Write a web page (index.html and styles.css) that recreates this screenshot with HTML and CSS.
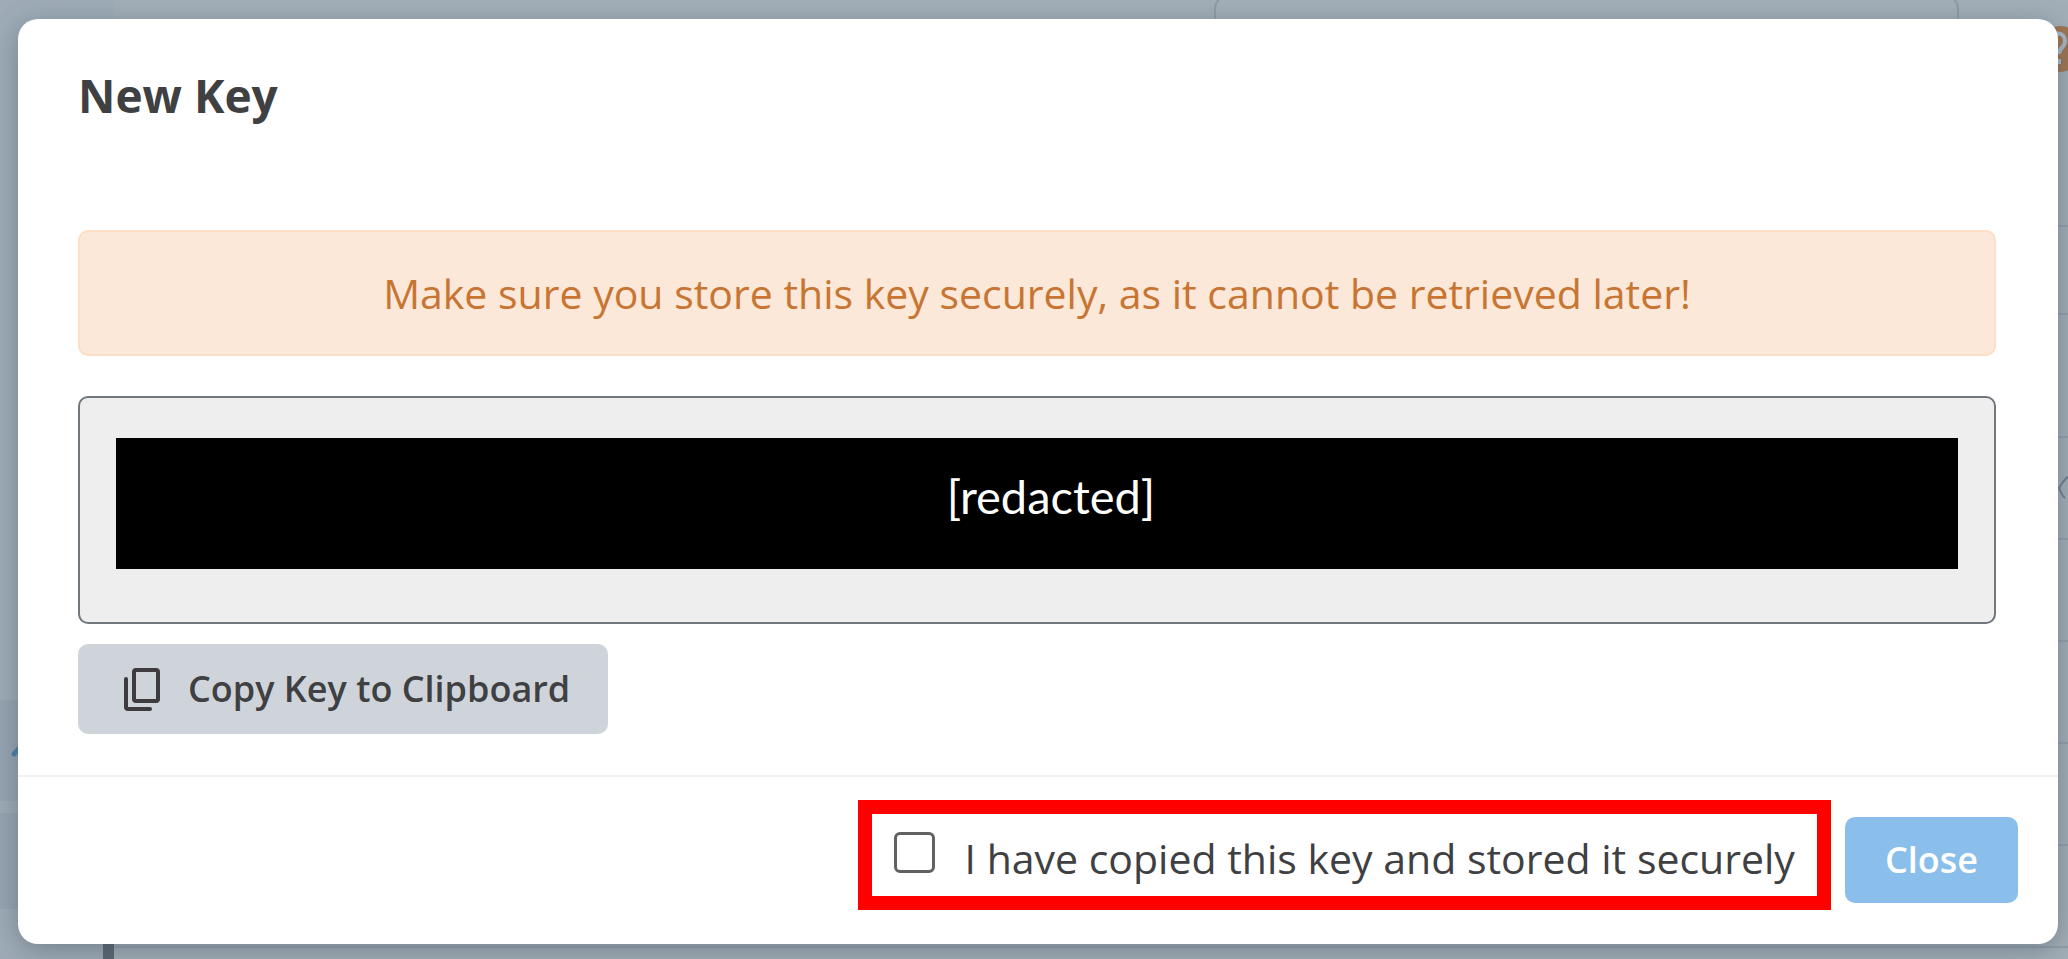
FILE: index.html
```html
<!DOCTYPE html>
<html lang="en">
<head>
<meta charset="utf-8">
<title>New Key</title>
<link rel="stylesheet" href="styles.css">
</head>
<body>
<div class="app" aria-hidden="true">
  <div class="sidebar">
    <div class="nav-item">
      <svg class="nav-icon" width="24" height="24" viewBox="0 0 24 24"><path d="M4 18 18 3" fill="none" stroke="#4680ae" stroke-width="5" stroke-linecap="round"/></svg>
    </div>
    <div class="nav-item"></div>
    <div class="scroll-thumb"></div>
  </div>
  <div class="content">
    <div class="topbar">
      <div class="search"></div>
      <svg class="help" width="46" height="46" viewBox="0 0 46 46"><circle cx="23" cy="23" r="23" fill="#a07550"/><path d="M14 15c0-10 14-10 14 0 0 7-6 6-6 13M22 33v5" fill="none" stroke="#a9bacb" stroke-width="4"/></svg>
    </div>
    <div class="rows">
      <div class="row first"></div>
      <div class="row tall"></div>
      <div class="row wide"></div>
      <div class="row"><svg class="chevron" width="10" height="24" viewBox="0 0 10 24"><path d="M10 1C6 3 4 8 1 12c2 4 3 8 6 10" fill="none" stroke="#6d8091" stroke-width="2"/></svg></div>
      <div class="row"></div>
      <div class="row"></div>
      <div class="row"></div>
      <div class="row"></div>
    </div>
  </div>
</div>
<div class="overlay">
  <section class="modal" role="dialog" aria-modal="true" aria-labelledby="title">
    <div class="body">
      <h1 class="title" id="title">New Key</h1>
      <div class="alert" role="alert">Make sure you store this key securely, as it cannot be retrieved later!</div>
      <div class="key-box"><div class="redacted">[redacted]</div></div>
      <button class="btn copy" type="button">
        <svg width="44" height="48" viewBox="0 0 44 48"><g fill="none" stroke="#3d3b3d" stroke-width="4" stroke-linejoin="round" stroke-linecap="round"><rect x="14" y="5" width="24" height="31" rx="2"/><path d="M6 14v28a2 2 0 0 0 2 2h22"/></g></svg>
        <span>Copy Key to Clipboard</span>
      </button>
    </div>
    <div class="footer">
      <label class="confirm"><input class="check" type="checkbox"><span>I have copied this key and stored it securely</span></label>
      <button class="btn close" type="button">Close</button>
    </div>
  </section>
</div>
</body>
</html>
```
FILE: styles.css
```css
* { box-sizing: border-box; }
body {
  margin: 0;
  position: relative;
  overflow: hidden;
  min-height: 100vh;
  background: #a3afb8;
  color: #3f4042;
  font-family: "Open Sans", "Noto Sans", sans-serif;
}
.app {
  position: absolute;
  inset: 0;
  display: flex;
}
.sidebar {
  width: 114px;
  padding-top: 700px;
  display: flex;
  flex-direction: column;
  gap: 12px;
  background: #9facb8;
}
.nav-item {
  height: 101px;
  padding: 36px 0 0 10px;
  background: #98a5b1;
  flex: none;
}
.nav-item + .nav-item { height: 96px; }
.scroll-thumb {
  width: 11px;
  flex: 1;
  align-self: flex-end;
  background: #5b6670;
}
.content { flex: 1; }
.topbar {
  height: 72px;
  display: flex;
  justify-content: flex-end;
  gap: 78px;
  margin-right: -15px;
}
.search {
  width: 745px;
  height: 48px;
  margin-top: -4px;
  border: 2px solid #8f9ca9;
  border-radius: 12px;
}
.help { margin-top: 26px; flex: none; }
.row {
  height: 102px;
  border-bottom: 2px solid #93a0ab;
  display: flex;
  justify-content: flex-end;
  align-items: center;
}
.row.first { height: 155px; }
.row.tall { height: 88px; }
.row.wide { height: 123px; }
.overlay {
  position: relative;
  min-height: 100vh;
  padding: 19px 10px 15px 18px;
  display: flex;
}
.modal {
  flex: 1;
  display: flex;
  flex-direction: column;
  background: #fff;
  border-radius: 20px;
  box-shadow: 0 6px 28px rgba(60, 75, 88, 0.45);
}
.body {
  padding: 43px 62px 41px 60px;
  flex: 1;
}
.title {
  margin: 0 0 102px;
  font-size: 46px;
  line-height: 66px;
  font-weight: 700;
}
.alert {
  padding: 31px 24px;
  border: 2px solid #fddfc5;
  border-radius: 10px;
  background: #fbe8d8;
  color: #c87533;
  font-size: 41px;
  line-height: 60px;
  text-align: center;
}
.key-box {
  margin: 40px 0 20px;
  padding: 40px 36px 53px;
  border: 2px solid #70777d;
  border-radius: 10px;
  background: #eee;
}
.redacted {
  padding: 28px 0 43px 28px;
  background: #000;
  color: #fff;
  font-family: Lato, "Open Sans", sans-serif;
  font-size: 47px;
  line-height: 60px;
  text-align: center;
}
.btn {
  display: flex;
  align-items: center;
  border: 0;
  border-radius: 10px;
  font-family: inherit;
  font-size: 36px;
  line-height: 50px;
  font-weight: 600;
}
.copy {
  gap: 24px;
  padding: 20px 38px 20px 42px;
  background: #cfd4db;
  color: #3f4042;
}
.footer {
  padding: 23px 40px 34px;
  border-top: 2px solid #f1f1f1;
  display: flex;
  justify-content: flex-end;
  align-items: center;
  gap: 14px;
}
.confirm {
  display: flex;
  align-items: flex-start;
  gap: 30px;
  padding: 14px 22px 8px;
  border: 14px solid #f00;
  font-size: 41px;
  line-height: 60px;
}
.check {
  appearance: none;
  flex: none;
  width: 41px;
  height: 41px;
  margin: 4px 0 0;
  border: 3px solid #606163;
  border-radius: 6px;
  background: #fff;
}
.close {
  margin-top: 10px;
  padding: 18px 40px;
  background: #8abeeb;
  color: #fff;
}
```
